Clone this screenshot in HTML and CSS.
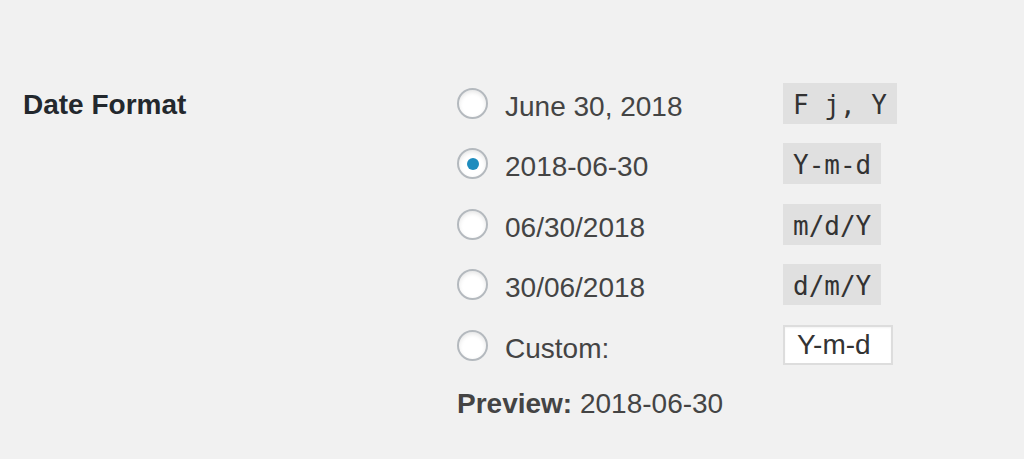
FILE: index.html
```html
<!doctype html>
<html>
<head>
<meta charset="utf-8">
<title>General Settings</title>
<link rel="stylesheet" href="styles.css">
</head>
<body>
<div class="wrap">
    <div class="field">
        <div class="field-label">Date Format</div>
        <fieldset class="field-body">
            <label class="opt">
                <input type="radio" name="date_format" value="F j, Y">
                <span class="opt-text">June 30, 2018</span>
                <code>F j, Y</code>
            </label>
            <label class="opt">
                <input type="radio" name="date_format" value="Y-m-d" checked>
                <span class="opt-text">2018-06-30</span>
                <code>Y-m-d</code>
            </label>
            <label class="opt">
                <input type="radio" name="date_format" value="m/d/Y">
                <span class="opt-text">06/30/2018</span>
                <code>m/d/Y</code>
            </label>
            <label class="opt">
                <input type="radio" name="date_format" value="d/m/Y">
                <span class="opt-text">30/06/2018</span>
                <code>d/m/Y</code>
            </label>
            <label class="opt">
                <input type="radio" name="date_format" value="custom">
                <span class="opt-text">Custom:</span>
                <input type="text" class="custom-input" value="Y-m-d">
            </label>
            <p class="preview"><strong>Preview:</strong> 2018-06-30</p>
        </fieldset>
    </div>
</div>
</body>
</html>
```

FILE: styles.css
```css
*{ margin:0; padding:0; box-sizing:border-box;}
html,body{ background:#f1f1f1;}
body{ font-family:"Liberation Sans", Arial, sans-serif; font-size:28px; color:#444;}
.wrap{ padding:82.5px 0 0 23px;}
.field{ display:flex;}
.field-label{ width:434px; padding-top:1.5px; font-weight:bold; color:#23282d; line-height:41px;}
.field-body{ border:0; display:flex; flex-direction:column; gap:19.5px;}
.opt{ display:flex; align-items:center; height:41px; cursor:pointer;}
.opt input[type=radio]{
    appearance:none; -webkit-appearance:none;
    width:31px; height:31px; margin:0 17px 0 0;
    border:2px solid #b4b9be; border-radius:50%;
    background:#fff; box-shadow:inset 0 2px 4px rgba(0,0,0,.1);
    display:inline-grid; place-items:center; flex:none;
}
.opt input[type=radio]:checked::before{
    content:""; width:12px; height:12px; border-radius:50%; background:#1e8cbe;
}
.opt-text{ min-width:278px; line-height:41px; padding-top:6px;}
.opt code{
    font-family:"DejaVu Sans Mono", Menlo, monospace; font-size:26px; color:#333;
    background:#e0e0e0; height:41px; line-height:37px; padding:4px 10px 0;
}
.custom-input{
    width:110px; height:40px; border:2px solid #ddd; background:#fff;
    font:28px "Liberation Sans", Arial, sans-serif; color:#333; padding:0 12px;
    box-shadow:inset 0 1px 2px rgba(0,0,0,.05); outline:none;
}
.preview{ margin-top:-2px; line-height:41px;}
.preview strong{ font-weight:bold;}
```
